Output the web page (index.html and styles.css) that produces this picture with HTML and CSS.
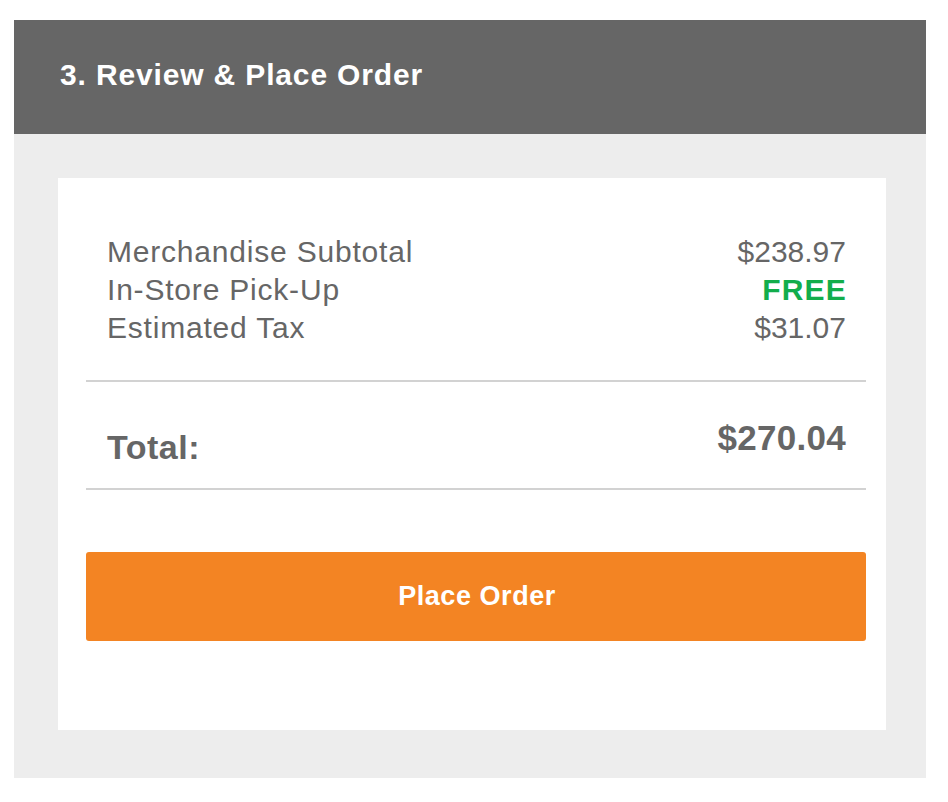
FILE: index.html
```html
<!DOCTYPE html>
<html>
<head>
<meta charset="utf-8">
<link rel="stylesheet" href="styles.css">
</head>
<body>
<div class="panel">
  <div class="panel-header">3. Review &amp; Place Order</div>
  <div class="panel-body">
    <div class="card">
      <div class="summary">
        <div class="row"><span class="label">Merchandise Subtotal</span><span>$238.97</span></div>
        <div class="row"><span class="label">In-Store Pick-Up</span><span class="free">FREE</span></div>
        <div class="row"><span class="label">Estimated Tax</span><span>$31.07</span></div>
      </div>
      <div class="total">
        <span class="total-label">Total:</span>
        <span class="total-amount">$270.04</span>
      </div>
      <button class="place-order">Place Order</button>
    </div>
  </div>
</div>
</body>
</html>
```

FILE: styles.css
```css
html, body {
  margin: 0;
  padding: 0;
  background: #ffffff;
  font-family: "Liberation Sans", Arial, Helvetica, sans-serif;
}

.panel {
  width: 912px;
  margin: 20px 0 0 14px;
}

.panel-header {
  height: 114px;
  background: #666666;
  color: #ffffff;
  font-weight: bold;
  font-size: 30px;
  letter-spacing: 0.85px;
  display: flex;
  align-items: center;
  padding: 0 0 4px 46px;
  box-sizing: border-box;
}

.panel-body {
  background: #ededed;
  padding: 44px 40px 48px 44px;
}

.card {
  background: #ffffff;
  height: 552px;
  box-sizing: border-box;
  padding: 55px 20px 0 28px;
}

.summary {
  padding: 0 20px 33px 21px;
  border-bottom: 2px solid #d2d2d2;
  color: #666666;
  font-size: 30px;
  line-height: 38px;
}

.row {
  display: flex;
  justify-content: space-between;
}

.label {
  letter-spacing: 0.8px;
}

.free {
  color: #12ad4b;
  font-weight: bold;
  letter-spacing: 1.2px;
  margin-right: -1px;
}

.total {
  height: 108px;
  box-sizing: border-box;
  border-bottom: 2px solid #d2d2d2;
  display: flex;
  justify-content: space-between;
  align-items: flex-start;
  padding: 0 20px 0 21px;
  color: #666666;
  font-weight: bold;
  font-size: 35px;
}

.total-label {
  margin-top: 46px;
  font-size: 34px;
  letter-spacing: 0.5px;
}

.total-amount {
  margin-top: 36px;
  letter-spacing: 0.3px;
}

.place-order {
  display: block;
  width: 100%;
  height: 89px;
  margin-top: 62px;
  border: none;
  border-radius: 3px;
  background: #f38423;
  color: #ffffff;
  font-family: "Liberation Sans", Arial, Helvetica, sans-serif;
  font-weight: bold;
  font-size: 27px;
  letter-spacing: 0.55px;
  padding: 0 0 0 2px;
}
```
